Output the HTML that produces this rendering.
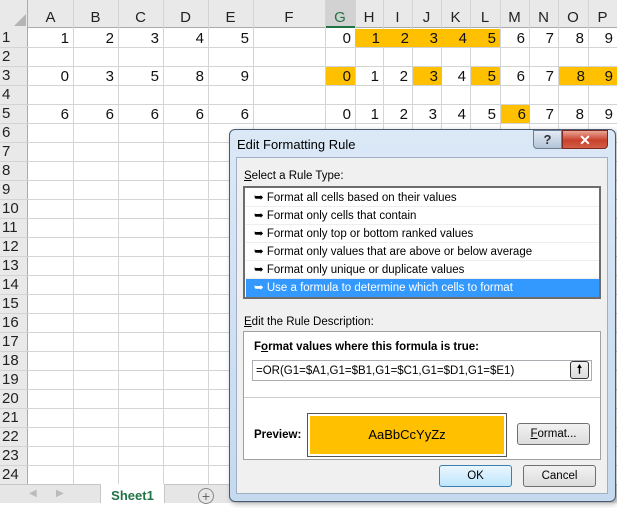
<!DOCTYPE html>
<html><head><style>
*{margin:0;padding:0;box-sizing:border-box}
body{width:617px;height:503px;overflow:hidden;background:#fff;font-family:"Liberation Sans",sans-serif;position:relative}
.a{position:absolute}
.hl{position:absolute;left:0;width:617px;height:1px;background:#d4d4d4}
.vl{position:absolute;top:0;height:484px;width:1px;background:#d4d4d4}
.ch{position:absolute;top:0;height:28px;font-size:15px;color:#222;text-align:center;line-height:36px}
.rh{position:absolute;left:0;width:28px;font-size:15px;color:#222;text-align:left;padding-left:2px;height:19px;line-height:20px}
.c{position:absolute;height:18px;font-size:15px;color:#111;text-align:right;padding-right:4px;line-height:20px}
.y{background:#ffc000}
.d{font-size:11.5px;color:#000}
.li{position:absolute;left:246px;width:353px;height:18px;line-height:18px;padding-left:8px;font-size:11.5px}
.btn{position:absolute;border:1px solid #707070;border-radius:3px;background:linear-gradient(#f2f2f2,#dcdcdc);font-size:11.5px;text-align:center}
</style></head><body>
<!-- headers -->
<div class="a" style="left:0;top:0;width:617px;height:28px;background:#e9e9e9;border-bottom:1px solid #ababab"></div>
<div class="a" style="left:0;top:0;width:28px;height:503px;background:#e9e9e9;border-right:1px solid #ababab"></div>
<div class="a" style="left:326px;top:0;width:29px;height:28px;background:#d2d2d2;border-bottom:2px solid #217346"></div>
<div class="a" style="left:14px;top:14px;width:0;height:0;border-left:12px solid transparent;border-bottom:12px solid #b5b5b5"></div>
<!-- grid lines -->
<div class="hl" style="top:47px"></div><div class="hl" style="top:66px"></div><div class="hl" style="top:85px"></div><div class="hl" style="top:104px"></div><div class="hl" style="top:123px"></div><div class="hl" style="top:142px"></div><div class="hl" style="top:161px"></div><div class="hl" style="top:180px"></div><div class="hl" style="top:199px"></div><div class="hl" style="top:218px"></div><div class="hl" style="top:237px"></div><div class="hl" style="top:256px"></div><div class="hl" style="top:275px"></div><div class="hl" style="top:294px"></div><div class="hl" style="top:313px"></div><div class="hl" style="top:332px"></div><div class="hl" style="top:351px"></div><div class="hl" style="top:370px"></div><div class="hl" style="top:389px"></div><div class="hl" style="top:408px"></div><div class="hl" style="top:427px"></div><div class="hl" style="top:446px"></div><div class="hl" style="top:465px"></div>
<div class="vl" style="left:73px"></div><div class="vl" style="left:118px"></div><div class="vl" style="left:163px"></div><div class="vl" style="left:208px"></div><div class="vl" style="left:253px"></div><div class="vl" style="left:325px"></div><div class="vl" style="left:355px"></div><div class="vl" style="left:383px"></div><div class="vl" style="left:412px"></div><div class="vl" style="left:441px"></div><div class="vl" style="left:470px"></div><div class="vl" style="left:500px"></div><div class="vl" style="left:529px"></div><div class="vl" style="left:558px"></div><div class="vl" style="left:588px"></div>
<!-- col letters -->
<div class="ch" style="left:28px;width:45px">A</div><div class="ch" style="left:73px;width:45px">B</div><div class="ch" style="left:118px;width:45px">C</div><div class="ch" style="left:163px;width:45px">D</div><div class="ch" style="left:208px;width:45px">E</div><div class="ch" style="left:253px;width:72px">F</div><div class="ch" style="left:325px;width:30px;color:#217346">G</div><div class="ch" style="left:355px;width:28px">H</div><div class="ch" style="left:383px;width:29px">I</div><div class="ch" style="left:412px;width:29px">J</div><div class="ch" style="left:441px;width:29px">K</div><div class="ch" style="left:470px;width:30px">L</div><div class="ch" style="left:500px;width:29px">M</div><div class="ch" style="left:529px;width:29px">N</div><div class="ch" style="left:558px;width:30px">O</div><div class="ch" style="left:588px;width:29px">P</div>
<!-- row numbers -->
<div class="rh" style="top:28px">1</div><div class="rh" style="top:47px">2</div><div class="rh" style="top:66px">3</div><div class="rh" style="top:85px">4</div><div class="rh" style="top:104px">5</div><div class="rh" style="top:123px">6</div><div class="rh" style="top:142px">7</div><div class="rh" style="top:161px">8</div><div class="rh" style="top:180px">9</div><div class="rh" style="top:199px">10</div><div class="rh" style="top:218px">11</div><div class="rh" style="top:237px">12</div><div class="rh" style="top:256px">13</div><div class="rh" style="top:275px">14</div><div class="rh" style="top:294px">15</div><div class="rh" style="top:313px">16</div><div class="rh" style="top:332px">17</div><div class="rh" style="top:351px">18</div><div class="rh" style="top:370px">19</div><div class="rh" style="top:389px">20</div><div class="rh" style="top:408px">21</div><div class="rh" style="top:427px">22</div><div class="rh" style="top:446px">23</div><div class="rh" style="top:465px">24</div>
<!-- row 1 -->
<div class="c" style="top:29px;left:28px;width:45px">1</div><div class="c" style="top:29px;left:73px;width:45px">2</div><div class="c" style="top:29px;left:118px;width:45px">3</div><div class="c" style="top:29px;left:163px;width:45px">4</div><div class="c" style="top:29px;left:208px;width:45px">5</div>
<div class="c" style="top:29px;left:326px;width:29px">0</div><div class="c y" style="top:29px;left:355px;width:29px">1</div><div class="c y" style="top:29px;left:384px;width:29px">2</div><div class="c y" style="top:29px;left:413px;width:29px">3</div><div class="c y" style="top:29px;left:442px;width:29px">4</div><div class="c y" style="top:29px;left:471px;width:29px">5</div><div class="c" style="top:29px;left:501px;width:28px">6</div><div class="c" style="top:29px;left:530px;width:28px">7</div><div class="c" style="top:29px;left:559px;width:29px">8</div><div class="c" style="top:29px;left:589px;width:28px">9</div>
<!-- row 3 -->
<div class="c" style="top:67px;left:28px;width:45px">0</div><div class="c" style="top:67px;left:73px;width:45px">3</div><div class="c" style="top:67px;left:118px;width:45px">5</div><div class="c" style="top:67px;left:163px;width:45px">8</div><div class="c" style="top:67px;left:208px;width:45px">9</div>
<div class="c y" style="top:67px;left:326px;width:29px">0</div><div class="c" style="top:67px;left:356px;width:27px">1</div><div class="c" style="top:67px;left:384px;width:28px">2</div><div class="c y" style="top:67px;left:413px;width:29px">3</div><div class="c" style="top:67px;left:442px;width:28px">4</div><div class="c y" style="top:67px;left:471px;width:29px">5</div><div class="c" style="top:67px;left:501px;width:28px">6</div><div class="c" style="top:67px;left:530px;width:28px">7</div><div class="c y" style="top:67px;left:559px;width:30px">8</div><div class="c y" style="top:67px;left:589px;width:28px">9</div>
<!-- row 5 -->
<div class="c" style="top:105px;left:28px;width:45px">6</div><div class="c" style="top:105px;left:73px;width:45px">6</div><div class="c" style="top:105px;left:118px;width:45px">6</div><div class="c" style="top:105px;left:163px;width:45px">6</div><div class="c" style="top:105px;left:208px;width:45px">6</div>
<div class="c" style="top:105px;left:326px;width:29px">0</div><div class="c" style="top:105px;left:356px;width:27px">1</div><div class="c" style="top:105px;left:384px;width:28px">2</div><div class="c" style="top:105px;left:413px;width:28px">3</div><div class="c" style="top:105px;left:442px;width:28px">4</div><div class="c" style="top:105px;left:471px;width:29px">5</div><div class="c y" style="top:105px;left:501px;width:29px">6</div><div class="c" style="top:105px;left:530px;width:28px">7</div><div class="c" style="top:105px;left:559px;width:29px">8</div><div class="c" style="top:105px;left:589px;width:28px">9</div>
<!-- tab bar -->
<div class="a" style="left:0;top:484px;width:617px;height:19px;background:#e6e6e6;border-top:1px solid #c6c6c6"></div>
<div class="a" style="left:29px;top:488px;color:#bbb;font-size:10px">◀</div>
<div class="a" style="left:56px;top:488px;color:#bbb;font-size:10px">▶</div>
<div class="a" style="left:100px;top:484px;width:65px;height:19px;background:#fff;border-left:1px solid #c6c6c6;border-right:1px solid #c6c6c6;color:#217346;font-weight:bold;font-size:13px;text-align:center;line-height:24px">Sheet1</div>
<div class="a" style="left:198px;top:488px;width:16px;height:16px;border:1px solid #888;border-radius:50%;color:#666;font-size:14px;text-align:center;line-height:14px">+</div>
<!-- dialog -->
<div class="a" style="left:229px;top:129px;width:387px;height:373px;border:1px solid #4a5a70;border-radius:6px;background:linear-gradient(#dbe8f6,#c5d9ef);box-shadow:2px 2px 6px rgba(0,0,0,.3)"></div>
<div class="a d" style="left:237px;top:137px;font-size:13px">Edit Formatting Rule</div>
<div class="a" style="left:533px;top:130px;width:29px;height:19px;border:1px solid #6f7e93;border-radius:0 0 0 4px;background:linear-gradient(#e3ebf5,#b3c3d8);text-align:center;color:#333;font-weight:bold;font-size:13px;line-height:18px">?</div>
<div class="a" style="left:562px;top:130px;width:46px;height:19px;border:1px solid #7a2a22;border-radius:0 0 4px 0;background:linear-gradient(#e9a594,#c8412c 55%,#d35f46);text-align:center;color:#fff;font-weight:bold;font-size:14px;line-height:18px">✕</div>
<div class="a" style="left:236px;top:157px;width:372px;height:337px;background:#f0f0f0;border:1px solid #9fb0c6"></div>
<div class="a d" style="left:244px;top:170px"><u>S</u>elect a Rule Type:</div>
<div class="a" style="left:243px;top:186px;width:358px;height:113px;background:#fff;border:2px solid #6d6d6d"></div>
<div class="li" style="top:189px;border-bottom:1px solid #eee">➥ Format all cells based on their values</div>
<div class="li" style="top:207px;border-bottom:1px solid #eee">➥ Format only cells that contain</div>
<div class="li" style="top:225px;border-bottom:1px solid #eee">➥ Format only top or bottom ranked values</div>
<div class="li" style="top:243px;border-bottom:1px solid #eee">➥ Format only values that are above or below average</div>
<div class="li" style="top:261px;border-bottom:1px solid #eee">➥ Format only unique or duplicate values</div>
<div class="li" style="top:279px;background:#3399ff;color:#fff">➥ Use a formula to determine which cells to format</div>
<div class="a d" style="left:244px;top:316px"><u>E</u>dit the Rule Description:</div>
<div class="a" style="left:243px;top:331px;width:358px;height:129px;background:#fff;border:1px solid #a0a0a0"></div>
<div class="a d" style="left:254px;top:341px;font-weight:bold">F<u>o</u>rmat values where this formula is true:</div>
<div class="a d" style="left:252px;top:360px;width:340px;height:21px;border:1px solid #abadb3;background:#fff;padding-left:3px;line-height:20px">=OR(G1=$A1,G1=$B1,G1=$C1,G1=$D1,G1=$E1)</div>
<div class="btn" style="left:570px;top:361px;width:19px;height:18px;font-weight:bold;line-height:16px;border-color:#333">🠕</div>
<div class="a" style="left:244px;top:397px;width:356px;height:1px;background:#ccc"></div>
<div class="a d" style="left:254px;top:429px;font-weight:bold">Preview:</div>
<div class="a" style="left:307px;top:413px;width:200px;height:44px;border:1px solid #555;background:#fff;padding:2px"><div style="width:100%;height:100%;background:#ffc000;font-size:13px;text-align:center;line-height:38px">AaBbCcYyZz</div></div>
<div class="btn" style="left:517px;top:423px;width:73px;height:22px;line-height:20px"><u>F</u>ormat...</div>
<div class="btn" style="left:439px;top:465px;width:73px;height:22px;line-height:20px;border-color:#3c7fb1;background:linear-gradient(#eaf6fd,#bee6fd)">OK</div>
<div class="btn" style="left:523px;top:465px;width:73px;height:22px;line-height:20px">Cancel</div>
</body></html>
